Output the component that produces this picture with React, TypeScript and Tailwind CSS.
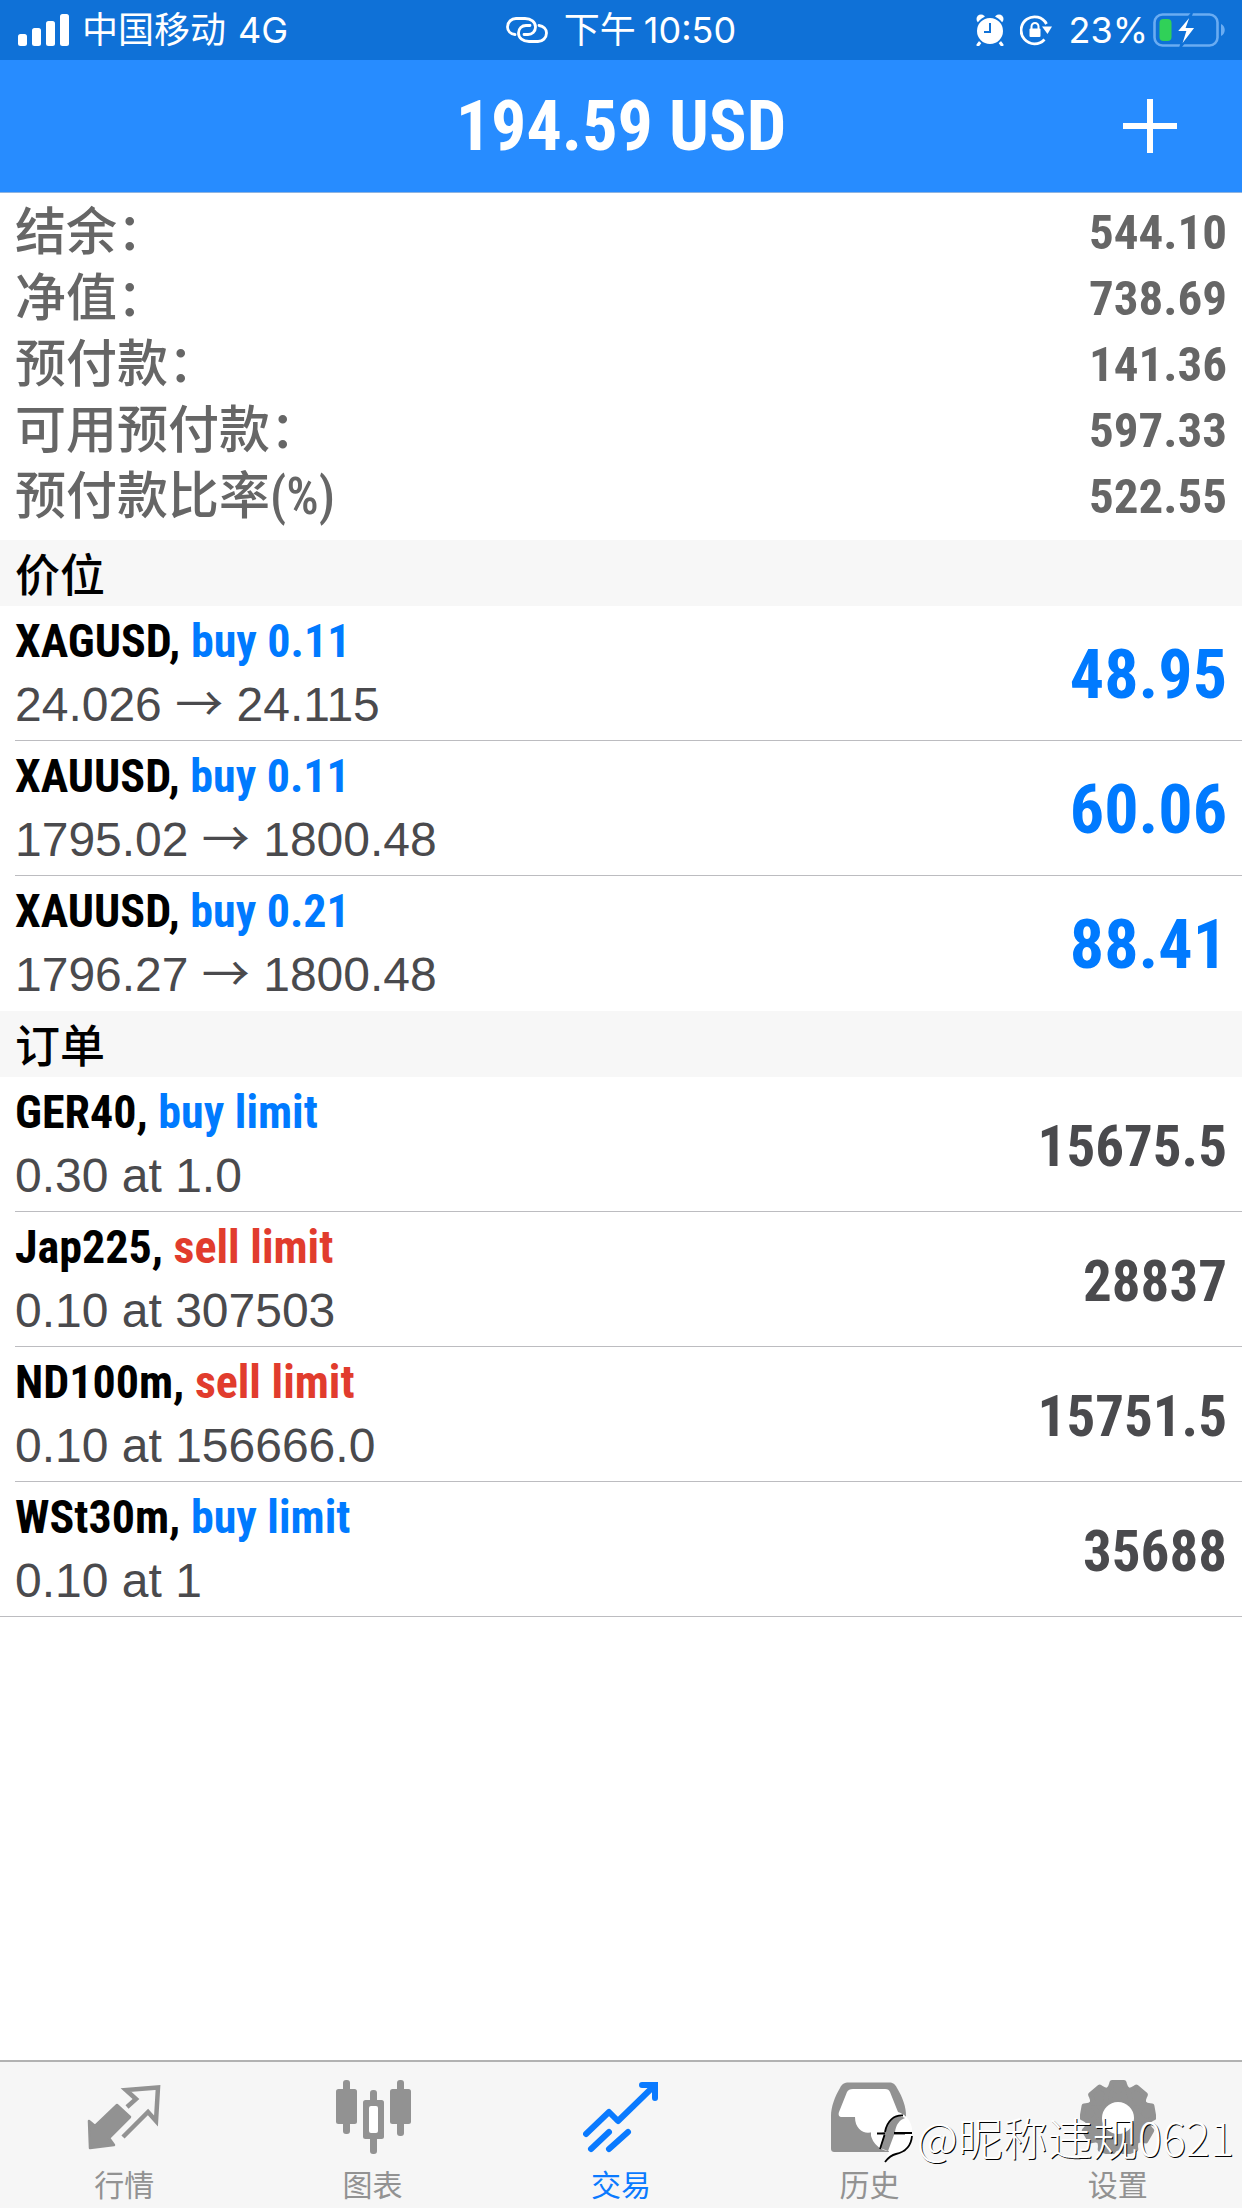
interface SummaryItem {
  label: string;
  value: string;
}

interface Entry {
  symbol: string;
  action: string;
  side: 'buy' | 'sell';
  detail: React.ReactNode;
  value: string;
}

const NARROW = "font-['Roboto_Condensed','Noto_Sans_CJK_SC',sans-serif]";
const SANS = "font-['Liberation_Sans','Noto_Sans_CJK_SC',sans-serif]";

const sideColors = {
  buy: 'text-[#007aff]',
  sell: 'text-[#e13c2d]',
};

const summary: SummaryItem[] = [
  { label: '结余：', value: '544.10' },
  { label: '净值：', value: '738.69' },
  { label: '预付款：', value: '141.36' },
  { label: '可用预付款：', value: '597.33' },
  { label: '预付款比率(%)', value: '522.55' },
];

const positions: Entry[] = [
  { symbol: 'XAGUSD', action: 'buy 0.11', side: 'buy', detail: <Move from="24.026" to="24.115" />, value: '48.95' },
  { symbol: 'XAUUSD', action: 'buy 0.11', side: 'buy', detail: <Move from="1795.02" to="1800.48" />, value: '60.06' },
  { symbol: 'XAUUSD', action: 'buy 0.21', side: 'buy', detail: <Move from="1796.27" to="1800.48" />, value: '88.41' },
];

const orders: Entry[] = [
  { symbol: 'GER40', action: 'buy limit', side: 'buy', detail: '0.30 at 1.0', value: '15675.5' },
  { symbol: 'Jap225', action: 'sell limit', side: 'sell', detail: '0.10 at 307503', value: '28837' },
  { symbol: 'ND100m', action: 'sell limit', side: 'sell', detail: '0.10 at 156666.0', value: '15751.5' },
  { symbol: 'WSt30m', action: 'buy limit', side: 'buy', detail: '0.10 at 1', value: '35688' },
];

function Move({ from, to }: { from: string; to: string }) {
  return (
    <>
      {from} <span className="font-['Noto_Sans_CJK_SC',sans-serif] leading-none">→</span> {to}
    </>
  );
}

function StatusBar() {
  return (
    <div className="grid h-[60px] grid-cols-[1fr_auto_1fr] items-center bg-[#0f71d7] px-4 font-['Inter','Noto_Sans_CJK_SC',sans-serif] text-[36px] leading-[60px] text-white">
      <div className="flex items-center gap-3">
        <svg className="h-8 w-[54px]" viewBox="0 0 54 32" fill="currentColor">
          <rect x="2" y="20" width="9" height="12" rx="2.5" />
          <rect x="16" y="14" width="9" height="18" rx="2.5" />
          <rect x="30" y="7" width="9" height="25" rx="2.5" />
          <rect x="44" y="0" width="9" height="32" rx="2.5" />
        </svg>
        <span>中国移动</span>
        <span>4G</span>
      </div>
      <div className="flex items-center gap-4">
        <svg className="h-[26px] w-[42px]" viewBox="0 0 42 26" fill="none" stroke="currentColor" strokeWidth="2.8" strokeLinecap="round">
          <path d="M9 17.500C4.500 17 1.500 14 1.500 10C1.500 5 5.500 1.500 10 1.500H19C25 1.500 29.500 5 29.500 10C29.500 14.500 26 17.500 22 17.500H18" />
          <path d="M33 8.500C37.500 9 40.500 12 40.500 16C40.500 21 36.500 24.500 32 24.500H23C17 24.500 12.500 21 12.500 16C12.500 11.500 16 8.500 20 8.500H24" />
        </svg>
        <div className="flex items-center gap-2">
          <span>下午</span>
          <span>10:50</span>
        </div>
      </div>
      <div className="flex items-center justify-end gap-1">
        <div className="flex items-center gap-4">
          <svg className="h-8 w-7" viewBox="0 0 28 32">
            <path d="M5 27L2 31M23 27L26 31" stroke="currentColor" strokeWidth="3" strokeLinecap="round" />
            <circle cx="5" cy="5" r="4.500" fill="currentColor" />
            <circle cx="23" cy="5" r="4.500" fill="currentColor" />
            <circle cx="14" cy="17" r="14" fill="currentColor" stroke="#0f71d7" strokeWidth="2" />
            <path d="M14 9V18H8" fill="none" stroke="#0f71d7" strokeWidth="2" />
          </svg>
          <svg className="h-8 w-8" viewBox="0 0 32 32" fill="none" stroke="currentColor">
            <path d="M24.500 25.500A13.500 13.500 0 1 1 26.500 10" strokeWidth="2.800" />
            <path d="M22 12.500H32L27.500 20Z" fill="currentColor" stroke="none" />
            <rect x="9.500" y="14.500" width="11" height="8.500" rx="1" fill="currentColor" stroke="none" />
            <path d="M11.500 15V12.500A3.500 3.500 0 0 1 18.500 12.500V15" strokeWidth="2" />
          </svg>
          <span>23%</span>
        </div>
        <svg className="h-9 w-[74px]" viewBox="0 0 74 36">
          <rect x="2.500" y="2.500" width="63" height="31" rx="8" fill="none" stroke="#6aacf2" strokeWidth="2.600" />
          <path d="M69 12C74 14 74 22 69 24Z" fill="#6aacf2" />
          <rect x="7.500" y="7" width="12" height="22" rx="4" fill="#30d158" />
          <path d="M40 1L24 20H33L28 36L44 15H35L40 1Z" fill="#fff" stroke="#0f71d7" strokeWidth="2" />
        </svg>
      </div>
    </div>
  );
}

function Header() {
  return (
    <header className="grid h-[133px] grid-cols-[1fr_auto_1fr] items-center border-b border-[#8fb4e0] bg-[#278cff] px-16 text-white">
      <h1 className={`col-start-2 text-[70px] leading-none font-bold ${NARROW}`}>194.59 USD</h1>
      <button type="button" aria-label="Add order" className="justify-self-end">
        <svg className="h-14 w-14" viewBox="0 0 56 56" stroke="currentColor" strokeWidth="6">
          <path d="M28 1V55M1 28H55" />
        </svg>
      </button>
    </header>
  );
}

function SectionTitle({ children }: { children: React.ReactNode }) {
  return (
    <h2 className="bg-[#f7f7f7] px-[15px] font-['Noto_Sans_CJK_SC',sans-serif] text-[45px] leading-[66px] font-medium text-black">
      {children}
    </h2>
  );
}

function EntryRow({ entry, border, valueClass }: { entry: Entry; border: string; valueClass: string }) {
  return (
    <li className={border}>
      <div className="flex h-[134px] items-center justify-between pr-[15px]">
        <div>
          <p className={`text-[46px] leading-[63px] font-bold text-black ${NARROW}`}>
            {entry.symbol}, <span className={sideColors[entry.side]}>{entry.action}</span>
          </p>
          <p className={`text-[48px] leading-[63px] text-[#4a4a4d] ${SANS}`}>{entry.detail}</p>
        </div>
        <span className={`pt-1 leading-none font-bold ${NARROW} ${valueClass}`}>{entry.value}</span>
      </div>
    </li>
  );
}

function QuotesIcon() {
  return (
    <svg className="h-[76px] w-[76px]" viewBox="0 0 76 76">
      <path d="M3 43L9 48L31 27L44 39L23 60L28 67L4 70Z" fill="currentColor" stroke="currentColor" strokeWidth="2.500" strokeLinejoin="round" />
      <path d="M41 29L50 21L40 12L72 9.500L70 43L62 34L37 59" fill="none" stroke="currentColor" strokeWidth="4.500" />
    </svg>
  );
}

function ChartIcon() {
  return (
    <svg className="h-[76px] w-[76px]" viewBox="0 0 76 76" fill="currentColor">
      <rect x="8" y="2" width="7" height="54" rx="3" />
      <rect x="1" y="11" width="21" height="35" rx="2.500" />
      <rect x="62" y="2" width="7" height="56" rx="3" />
      <rect x="55" y="11" width="21" height="35" rx="2.500" />
      <rect x="35" y="12" width="7" height="64" rx="3" />
      <rect x="28" y="22" width="21" height="39" rx="2.500" />
      <rect x="34" y="28" width="9" height="27" rx="2" fill="#fff" />
    </svg>
  );
}

function TradeIcon() {
  return (
    <svg className="h-[76px] w-[76px]" viewBox="0 0 76 76" fill="none" stroke="currentColor" strokeWidth="6" strokeLinecap="round">
      <path d="M3 56L26 34L35 43L71 8" strokeLinejoin="round" />
      <path d="M59 7H72V20" />
      <path d="M8 71L26 54M26 71L45 54" />
    </svg>
  );
}

function HistoryIcon() {
  return (
    <svg className="h-[76px] w-[76px]" viewBox="0 0 76 76">
      <path d="M18 4.500H58C62 4.500 64 6 66 10C72 20 75 29 75 38V70C75 73 74 74 71 74H4C1 74 0 73 0 70V38C0 29 4 18 9 10C11 6 13 4.500 18 4.500Z" fill="currentColor" />
      <path d="M22 11H54C57 11 58 12 59 14L67 34C68 37 67 39 65 39H50C50 60 24 60 24 39H11C8 39 7 37 8 34L16 14C17 12 19 11 22 11Z" fill="#fff" />
    </svg>
  );
}

function SettingsIcon() {
  const teeth = Array.from({ length: 9 }, (_, i) => i * 40);
  return (
    <svg className="h-[76px] w-[76px]" viewBox="0 0 76 76">
      <g fill="currentColor" stroke="currentColor" strokeWidth="5" strokeLinejoin="round">
        <circle cx="38" cy="40" r="29" />
        {teeth.map((angle) => (
          <path key={angle} d="M28 12C31 10 31 8 32 4.500H44C45 8 45 10 48 12L38 20Z" transform={`rotate(${angle} 38 40)`} />
        ))}
      </g>
      <circle cx="38" cy="40" r="16" fill="#fff" />
    </svg>
  );
}

const tabs = [
  { label: '行情', icon: <QuotesIcon />, active: false },
  { label: '图表', icon: <ChartIcon />, active: false },
  { label: '交易', icon: <TradeIcon />, active: true },
  { label: '历史', icon: <HistoryIcon />, active: false },
  { label: '设置', icon: <SettingsIcon />, active: false },
];

function TabBar() {
  return (
    <nav className="relative mt-auto grid h-[148px] grid-cols-5 border-t-2 border-[#b2b2b2] bg-[#f6f6f6] pt-4">
      {tabs.map((tab) => (
        <a
          key={tab.label}
          href="#"
          aria-current={tab.active ? 'page' : undefined}
          className={`flex flex-col items-center gap-2 ${tab.active ? 'text-[#0a7aff]' : 'text-[#929292]'}`}
        >
          {tab.icon}
          <span className="font-['Noto_Sans_CJK_SC',sans-serif] text-[30px] leading-[42px]">{tab.label}</span>
        </a>
      ))}
      <div className="absolute right-2 bottom-11 flex items-center gap-1 text-white">
        <svg className="h-[54px] w-[42px]" viewBox="0 0 42 54">
          <path d="M21 1A20 20 0 1 0 18 41L14 52C18 47 20 45 25 44C36 42 41 34 41 23A20 20 0 0 0 21 1Z" fill="#fff" />
          <path d="M29 6C21 7 16 13 14 22L7 24H13L9 38L17 41L23 25H34V22H24C25 15 28 10 34 8Z" fill="#929292" />
          <path d="M32 5.500C23 5 16 11 14 22M6 23.500H14M23 23H41M13.500 25L9 39M41 26C40 37 34 42 25 44C20 45 17 48 14 52" fill="none" stroke="#000" strokeWidth="1.800" />
        </svg>
        <span className="font-['Noto_Sans_CJK_SC',sans-serif] text-[45px] leading-[50px] font-light [text-shadow:1px_1px_0_#000]">
          @昵称违规0621
        </span>
      </div>
    </nav>
  );
}

export default function App() {
  return (
    <div className="flex min-h-screen flex-col bg-white">
      <StatusBar />
      <Header />
      <main>
        <dl className={`px-[15px] pt-[7px] pb-[10px] text-[#666666] ${NARROW}`}>
          {summary.map((item) => (
            <div key={item.label} className="flex h-[66px] items-center justify-between">
              <dt className="text-[51px] leading-[66px] font-medium">{item.label}</dt>
              <dd className="text-[49px] leading-[66px] font-bold">{item.value}</dd>
            </div>
          ))}
        </dl>

        <SectionTitle>价位</SectionTitle>
        <ul>
          {positions.map((entry, i) => (
            <EntryRow
              key={i}
              entry={entry}
              border="ml-[15px] border-b border-[#bcbcc0] last:border-transparent"
              valueClass="text-[68px] text-[#007aff]"
            />
          ))}
        </ul>

        <SectionTitle>订单</SectionTitle>
        <ul className="border-b border-[#bcbcc0]">
          {orders.map((entry) => (
            <EntryRow
              key={entry.symbol}
              entry={entry}
              border="ml-[15px] border-b border-[#bcbcc0] last:border-b-0"
              valueClass="text-[57px] text-[#4a4a4d]"
            />
          ))}
        </ul>
      </main>
      <TabBar />
    </div>
  );
}
